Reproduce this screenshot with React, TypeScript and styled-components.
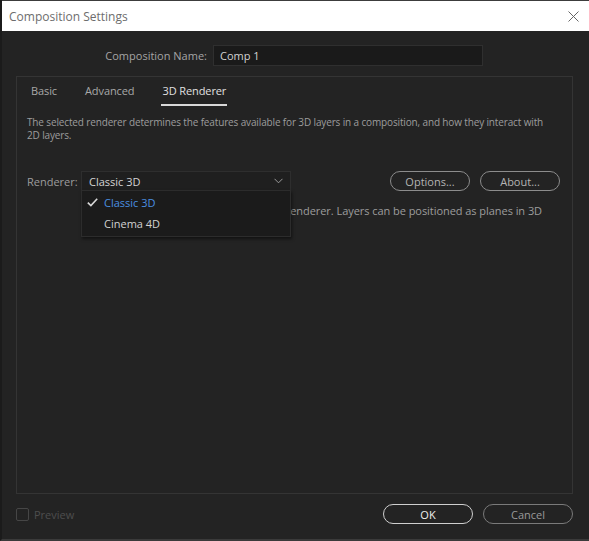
import styled, { createGlobalStyle } from 'styled-components';

const GlobalStyle = createGlobalStyle`
  html, body {
    margin: 0;
    padding: 0;
    background: #232323;
  }
  * {
    box-sizing: border-box;
  }
`;

const tabs = ['Basic', 'Advanced', '3D Renderer'];
const renderers = ['Classic 3D', 'Cinema 4D'];

export default function App() {
  const activeTab = '3D Renderer';
  const selected = 'Classic 3D';

  return (
    <>
      <GlobalStyle />
      <Window>
        <TitleBar>
          <TitleText>Composition Settings</TitleText>
          <CloseButton aria-label="Close">
            <svg width="11" height="11" viewBox="0 0 11 11">
              <path d="M0.5 0.5 L10.5 10.5 M10.5 0.5 L0.5 10.5" stroke="#666" strokeWidth="1" fill="none" />
            </svg>
          </CloseButton>
        </TitleBar>
        <Body>
          <NameRow>
            <NameLabel>Composition Name:</NameLabel>
            <NameInput value="Comp 1" readOnly />
          </NameRow>
          <Panel>
            <TabBar>
              {tabs.map((tab) => (
                <Tab key={tab} active={tab === activeTab}>
                  {tab}
                </Tab>
              ))}
            </TabBar>
            <Description>
              The selected renderer determines the features available for 3D layers in a composition, and how they
              interact with 2D layers.
            </Description>
            <RendererRow>
              <FieldLabel>Renderer:</FieldLabel>
              <SelectWrap>
                <Select>
                  <span>{selected}</span>
                  <svg width="9" height="6" viewBox="0 0 9 6">
                    <path d="M0.5 0.8 L4.5 4.8 L8.5 0.8" stroke="#9a9a9a" strokeWidth="1" fill="none" />
                  </svg>
                </Select>
                <Menu>
                  {renderers.map((item) => (
                    <MenuItem key={item} checked={item === selected}>
                      <Check>
                        {item === selected && (
                          <svg width="11" height="9" viewBox="0 0 11 9">
                            <path d="M0.8 4.6 L3.9 7.6 L10.2 0.8" stroke="#d8d8d8" strokeWidth="1.6" fill="none" />
                          </svg>
                        )}
                      </Check>
                      {item}
                    </MenuItem>
                  ))}
                </Menu>
              </SelectWrap>
              <Spacer />
              <PillButton>Options...</PillButton>
              <PillButton>About...</PillButton>
            </RendererRow>
            <RendererNote>
              Classic 3D is the legacy After Effects renderer. Layers can be positioned as planes in 3D space.
            </RendererNote>
          </Panel>
          <Footer>
            <PreviewToggle>
              <CheckBox />
              Preview
            </PreviewToggle>
            <FooterButtons>
              <DialogButton primary>OK</DialogButton>
              <DialogButton>Cancel</DialogButton>
            </FooterButtons>
          </Footer>
        </Body>
      </Window>
    </>
  );
}

const Window = styled.div`
  display: flex;
  flex-direction: column;
  width: 589px;
  height: 541px;
  background: #232323;
  border-left: 2px solid #1b1b1b;
  border-bottom: 2px solid #3a3a3a;
  font-family: 'Open Sans', 'Noto Sans', sans-serif;
  overflow: hidden;
`;

const TitleBar = styled.div`
  display: flex;
  align-items: center;
  justify-content: space-between;
  height: 31px;
  margin-left: -2px;
  padding: 0 10px 0 9px;
  background: #ffffff;
  border-top: 1px solid #3c3c3c;
`;

const TitleText = styled.span`
  font-size: 12px;
  color: #6d6d6d;
`;

const CloseButton = styled.button`
  display: flex;
  padding: 0;
  border: none;
  background: none;
`;

const Body = styled.div`
  display: flex;
  flex: 1;
  flex-direction: column;
  padding: 14px 16px 0 14px;
`;

const NameRow = styled.div`
  display: flex;
  align-items: center;
  height: 21px;
`;

const NameLabel = styled.label`
  width: 191px;
  margin-right: 6px;
  text-align: right;
  font-size: 11px;
  color: #a5a5a5;
`;

const NameInput = styled.input`
  width: 270px;
  height: 21px;
  padding: 0 6px;
  background: #1a1a1a;
  border: 1px solid #2f2f2f;
  outline: none;
  font-family: 'Open Sans', 'Noto Sans', sans-serif;
  font-size: 11px;
  color: #d2d2d2;
`;

const Panel = styled.div`
  display: flex;
  flex: 1;
  flex-direction: column;
  margin-top: 10px;
  padding: 0 10px;
  border: 1px solid #343434;
`;

const TabBar = styled.div`
  display: flex;
  gap: 26px;
  height: 30px;
  padding: 6px 0 0 3px;
`;

const Tab = styled.div<{ active: boolean }>`
  height: 23px;
  border-bottom: 2px solid ${({ active }) => (active ? '#d8d8d8' : 'transparent')};
  padding: 0 1px;
  font-size: 11px;
  letter-spacing: -0.1px;
  color: ${({ active }) => (active ? '#e0e0e0' : '#a8a8a8')};
`;

const Description = styled.p`
  margin: 9px 0 0 0;
  max-width: 522px;
  font-size: 10px;
  line-height: 13px;
  letter-spacing: -0.14px;
  color: #9d9d9d;
`;

const RendererRow = styled.div`
  display: flex;
  align-items: center;
  margin-top: 29px;
  height: 20px;
`;

const FieldLabel = styled.span`
  width: 54px;
  font-size: 11px;
  color: #9d9d9d;
`;

const SelectWrap = styled.div`
  position: relative;
  width: 210px;
`;

const Select = styled.div`
  display: flex;
  align-items: center;
  justify-content: space-between;
  height: 20px;
  padding: 0 7px 0 7px;
  background: #1f1f1f;
  border: 1px solid #2e2e2e;
  font-size: 11px;
  color: #d4d4d4;
`;

const Menu = styled.div`
  position: absolute;
  top: 19px;
  left: 0;
  z-index: 2;
  width: 210px;
  padding: 1px 0 2px 0;
  background: #1b1b1b;
  border: 1px solid #2c2c2c;
  box-shadow: 1px 2px 3px rgba(0, 0, 0, 0.5);
`;

const MenuItem = styled.div<{ checked: boolean }>`
  display: flex;
  align-items: center;
  height: 21px;
  font-size: 11px;
  color: ${({ checked }) => (checked ? '#4a8fe0' : '#d2d2d2')};
`;

const Check = styled.span`
  display: flex;
  width: 22px;
  padding-left: 5px;
`;

const Spacer = styled.div`
  flex: 1;
`;

const PillButton = styled.button`
  width: 80px;
  height: 20px;
  margin-left: 10px;
  padding: 0;
  background: transparent;
  border: 1px solid #8c8c8c;
  border-radius: 10px;
  font-family: 'Open Sans', 'Noto Sans', sans-serif;
  font-size: 11px;
  color: #b4b4b4;

  &:last-child {
    margin-right: 2px;
  }
`;

const RendererNote = styled.p`
  width: 440px;
  margin: 13px 0 0 76px;
  font-size: 11px;
  line-height: 14px;
  letter-spacing: -0.05px;
  color: #9d9d9d;
`;

const Footer = styled.div`
  display: flex;
  align-items: center;
  justify-content: space-between;
  height: 45px;
  padding: 0 0 5px 0;
`;

const PreviewToggle = styled.label`
  display: flex;
  align-items: center;
  gap: 5px;
  font-size: 11px;
  color: #4e4e4e;
`;

const CheckBox = styled.span`
  width: 13px;
  height: 13px;
  border: 1px solid #464646;
  border-radius: 2px;
`;

const FooterButtons = styled.div`
  display: flex;
  gap: 10px;
`;

const DialogButton = styled.button<{ primary?: boolean }>`
  width: 90px;
  height: 20px;
  padding: 0;
  background: transparent;
  border: 1px solid ${({ primary }) => (primary ? '#cfcfcf' : '#7a7a7a')};
  border-radius: 10px;
  font-family: 'Open Sans', 'Noto Sans', sans-serif;
  font-size: 11px;
  color: ${({ primary }) => (primary ? '#eeeeee' : '#9a9a9a')};
`;
